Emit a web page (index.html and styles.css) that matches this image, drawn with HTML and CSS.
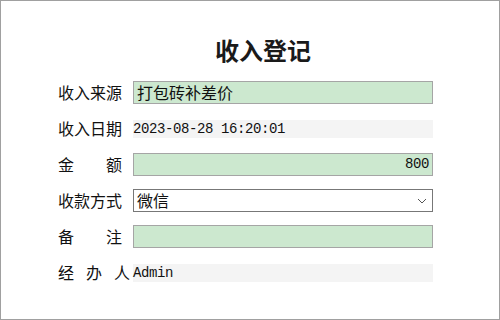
FILE: index.html
```html
<!DOCTYPE html>
<html lang="zh-CN">
<head>
<meta charset="UTF-8">
<title>收入登记</title>
<link rel="stylesheet" href="styles.css">
</head>
<body>
  <div class="window">
    <h1 class="title">收入登记</h1>
    <div class="form">
      <label class="label">收入来源</label>
      <div class="field field-input">打包砖补差价</div>

      <label class="label">收入日期</label>
      <div class="field-static"><span class="mono">2023-08-28 16:20:01</span></div>

      <label class="label">金额</label>
      <div class="field field-input field-right">800</div>

      <label class="label">收款方式</label>
      <div class="field field-select">
        <span>微信</span>
        <svg class="chevron" width="10" height="6" viewBox="0 0 10 6">
          <polyline points="1,1 5,5 9,1" fill="none" stroke="#555" stroke-width="1"/>
        </svg>
      </div>

      <label class="label">备注</label>
      <div class="field field-input"></div>

      <label class="label label-wide">经办人</label>
      <div class="field-static"><span class="mono">Admin</span></div>
    </div>
  </div>
</body>
</html>
```

FILE: styles.css
```css
body {
  margin: 0;
  font-family: "Noto Sans CJK SC", sans-serif;
  color: #111;
  background-color: #fff;
}
.window {
  width: 500px;
  height: 320px;
  box-sizing: border-box;
  border: 1px solid #a0a0a0;
  padding-top: 34px;
}
.title {
  margin: 0 0 16px 0;
  padding-left: 26px;
  text-align: center;
  font-size: 24px;
  line-height: 30px;
  font-weight: bold;
  color: #1a1a1a;
}
.form {
  display: grid;
  grid-template-columns: 75px 300px;
  grid-auto-rows: 23px;
  row-gap: 13px;
  padding-left: 57px;
}
.label {
  width: 64px;
  font-size: 16px;
  line-height: 23px;
  text-align: justify;
  text-align-last: justify;
  white-space: nowrap;
}
.label-wide {
  width: 72px;
}
.field {
  box-sizing: border-box;
  height: 23px;
  font-size: 16px;
  line-height: 21px;
  padding: 0 3px;
  display: flex;
  align-items: center;
}
.field-input {
  background-color: #cce8cf;
  border: 1px solid #a5a5a5;
}
.field-right {
  justify-content: flex-end;
  font-family: "Liberation Mono", monospace;
  font-size: 14px;
  letter-spacing: -0.4px;
}
.field-select {
  background-color: #fff;
  border: 1px solid #777;
  justify-content: space-between;
  padding-right: 5px;
}
.chevron {
  display: block;
}
.field-static {
  align-self: center;
  height: 18px;
  background-color: #f4f4f4;
  display: flex;
  align-items: center;
}
.mono {
  font-family: "Liberation Mono", monospace;
  font-size: 14px;
  letter-spacing: -0.4px;
  color: #111;
}
```
